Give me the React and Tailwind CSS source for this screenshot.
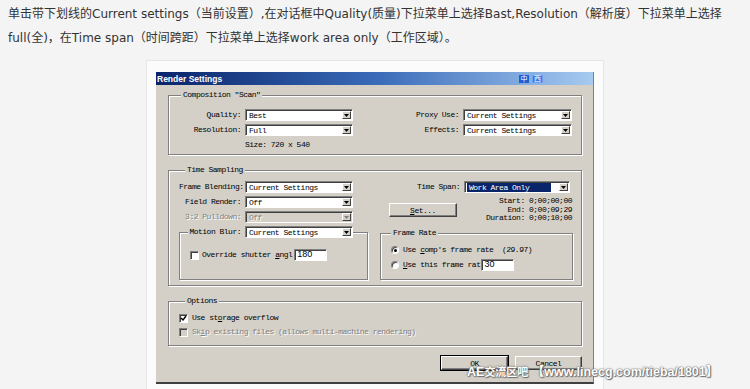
const mono = "font-['Liberation_Mono',monospace] text-[8px] tracking-[-0.5px] text-black";
const groupBox =
  "relative border border-[#808080] shadow-[inset_1px_1px_0_#fff,1px_1px_0_#fff]";
const dim = "text-[#808080] [text-shadow:1px_1px_0_#fff]";

const Arrow = ({ disabled }) => (
  <div className="mr-[1px] flex h-[8px] w-[9px] items-center justify-center border border-t-white border-l-white border-r-[#404040] border-b-[#404040] bg-[#d4d0c8]">
    <svg width="5" height="3" viewBox="0 0 5 3">
      <path d="M0 0h5L2.5 3z" fill={disabled ? "#808080" : "#000"} />
    </svg>
  </div>
);

const Select = ({ className, value, disabled, selected }) => (
  <div
    className={`flex h-[12px] items-center border border-t-[#808080] border-l-[#808080] border-r-white border-b-white shadow-[inset_1px_1px_0_#404040] ${
      disabled ? "bg-[#d4d0c8]" : "bg-white"
    } ${className}`}
  >
    <div className="flex-1 pl-[2px]">
      <span
        className={`block whitespace-pre leading-[9px] ${
          selected ? "mr-[8px] bg-[#0a246a] pl-[2px] text-white" : "pl-[1px]"
        } ${disabled ? dim : ""}`}
      >
        {value}
      </span>
    </div>
    <Arrow disabled={disabled} />
  </div>
);

const Field = ({ className, value }) => (
  <div
    className={`flex h-[12px] items-center border border-t-[#808080] border-l-[#808080] border-r-white border-b-white bg-white pl-[2px] shadow-[inset_1px_1px_0_#404040] font-['Liberation_Sans',sans-serif] text-[9px] tracking-normal ${className}`}
  >
    {value}
  </div>
);

const Check = ({ checked, disabled }) => (
  <div
    className={`flex h-[9px] w-[9px] items-center justify-center border border-t-[#808080] border-l-[#808080] border-r-white border-b-white shadow-[inset_1px_1px_0_#404040] ${
      disabled ? "bg-[#d4d0c8]" : "bg-white"
    }`}
  >
    {checked && (
      <svg width="7" height="7" viewBox="0 0 7 7">
        <path d="M1 3l2 2 3-4" stroke="#000" strokeWidth="1.4" fill="none" />
      </svg>
    )}
  </div>
);

const Radio = ({ on }) => (
  <div className="flex h-[8px] w-[8px] items-center justify-center rounded-full border border-t-[#808080] border-l-[#808080] border-r-white border-b-white bg-white shadow-[inset_1px_1px_0_#404040]">
    {on && <div className="h-[3px] w-[3px] rounded-full bg-black" />}
  </div>
);

const Button = ({ className, children }) => (
  <div
    className={`flex items-center justify-center border border-t-white border-l-white border-r-[#404040] border-b-[#404040] bg-[#d4d0c8] shadow-[inset_-1px_-1px_0_#808080] leading-[9px] ${className}`}
  >
    {children}
  </div>
);

const Row = ({ label, labelW, children, className = "" }) => (
  <div className={`flex h-[12px] items-center ${className}`}>
    <div className={`whitespace-nowrap text-right leading-[10px] ${labelW}`}>{label}</div>
    {children}
  </div>
);

export default function App() {
  return (
    <div className="relative h-[389px] w-[750px] overflow-hidden bg-[#f4f4f4]">
      {/* article text */}
      <p className="h-[60px] pl-[8px] pt-[2px] font-['DejaVu_Sans','Noto_Sans_CJK_SC',sans-serif] text-[12px] leading-[24px] text-[#333] whitespace-nowrap">
        单击带下划线的Current settings（当前设置）,在对话框中Quality(质量)下拉菜单上选择Bast,Resolution（解析度）下拉菜单上选择
        <br />
        full(全)，在Time span（时间跨距）下拉菜单上选择work area only（工作区域）。
      </p>

      {/* picture frame */}
      <div className="ml-[146px] h-[340px] w-[458px] border border-[#e6e6e6] bg-[#fbfbfb] px-[9px] pt-[11px]">
        <div className={`w-[438px] border-b-2 border-r border-b-[#404040] border-r-[#808080] bg-[#d4d0c8] ${mono}`}>
          {/* title bar */}
          <div className="flex h-[13px] items-center bg-gradient-to-r from-[#0a246a] via-[#3a6ab8] to-[#a6caf0] pl-[1px] pr-[50px]">
            <span className="flex-1 font-['Liberation_Sans',sans-serif] text-[8.5px] font-bold tracking-normal text-white leading-[10px]">
              Render Settings
            </span>
            <span className="flex h-[8px] w-[10px] items-center justify-center bg-[#1f5fd0] font-['Noto_Sans_CJK_SC',sans-serif] text-[7px] tracking-normal text-white">
              中
            </span>
            <span className="ml-[3px] flex h-[8px] w-[11px] items-center justify-center border border-[#6fa0ef] bg-[#3a7ae8] font-['Noto_Sans_CJK_SC',sans-serif] text-[7px] tracking-normal text-white">
              西
            </span>
          </div>

          {/* body */}
          <div className="flex flex-col pl-[12px] pr-[11px] pb-[12px]">
            {/* Composition */}
            <div className={`mt-[10px] h-[60px] ${groupBox}`}>
              <span className="absolute -top-[6px] left-[12px] bg-[#d4d0c8] px-[2px] leading-[10px]">
                Composition "Scan"
              </span>
              <div className="mt-[13px] flex pr-[9px]">
                <Row label="Quality:" labelW="w-[72px]">
                  <Select className="ml-[4px] w-[108px]" value="Best" />
                </Row>
                <div className="flex-1" />
                <Row label="Proxy Use:" labelW="w-[60px]">
                  <Select className="ml-[4px] w-[109px]" value="Current Settings" />
                </Row>
              </div>
              <div className="mt-[3px] flex pr-[9px]">
                <Row label="Resolution:" labelW="w-[72px]">
                  <Select className="ml-[4px] w-[108px]" value="Full" />
                </Row>
                <div className="flex-1" />
                <Row label="Effects:" labelW="w-[60px]">
                  <Select className="ml-[4px] w-[109px]" value="Current Settings" />
                </Row>
              </div>
              <div className="mt-[4px] pl-[76px] leading-[10px]">Size: 720 x 540</div>
            </div>

            {/* Time Sampling */}
            <div className={`mt-[15px] flex h-[116px] ${groupBox}`}>
              <span className="absolute -top-[6px] left-[16px] bg-[#d4d0c8] px-[2px] leading-[10px]">
                Time Sampling
              </span>
              <div className="flex w-[199px] flex-col pl-[10px] pt-[10px]">
                <Row label="Frame Blending:" labelW="w-[62px]">
                  <Select className="ml-[4px] w-[108px]" value="Current Settings" />
                </Row>
                <Row label="Field Render:" labelW="w-[62px]" className="mt-[3px]">
                  <Select className="ml-[4px] w-[108px]" value="Off" />
                </Row>
                <Row label={<span className={dim}>3:2 Pulldown:</span>} labelW="w-[62px]" className="mt-[3px]">
                  <Select className="ml-[4px] w-[108px]" value="Off" disabled />
                </Row>
                <div className={`mt-[9px] h-[48px] w-[189px] ${groupBox}`}>
                  <div className="-mt-[7px] flex h-[12px] items-center">
                    <div className="flex w-[61px] justify-end">
                      <span className="whitespace-nowrap bg-[#d4d0c8] pl-[1px] leading-[10px]">Motion Blur:</span>
                    </div>
                    <div className="w-[4px] self-stretch bg-[#d4d0c8]" />
                    <Select className="w-[108px]" value="Current Settings" />
                  </div>
                  <div className="mt-[11px] flex h-[12px] items-center pl-[10px]">
                    <Check />
                    <span className="ml-[3px] whitespace-pre leading-[10px]">
                      Override shutter <span className="underline">a</span>ngl
                    </span>
                    <Field className="ml-[2px] w-[33px]" value="180" />
                  </div>
                </div>
              </div>

              <div className="ml-[12px] flex w-[193px] flex-col pt-[10px]">
                <Row label="Time Span:" labelW="w-[80px]">
                  <Select className="ml-[4px] w-[106px]" value="Work Area Only" selected />
                </Row>
                <div className="mt-[4px] flex h-[26px] items-start">
                  <Button className="ml-[9px] mt-[6px] h-[14px] w-[68px]">
                    <span>
                      <span className="underline">S</span>et...
                    </span>
                  </Button>
                  <div className="ml-auto whitespace-pre pr-[1px] text-right leading-[8.5px]">
                    Start: 0;00;00;00
                    <br />
                    End: 0;00;09;29
                    <br />
                    Duration: 0;00;10;00
                  </div>
                </div>
                <div className={`mt-[10px] h-[47px] ${groupBox}`}>
                  <span className="absolute -top-[6px] left-[10px] bg-[#d4d0c8] px-[2px] leading-[10px]">
                    Frame Rate
                  </span>
                  <div className="mt-[11px] flex h-[10px] items-center pl-[10px]">
                    <Radio on />
                    <span className="ml-[4px] whitespace-pre leading-[10px]">
                      Use <span className="underline">c</span>omp's frame rate  (29.97)
                    </span>
                  </div>
                  <div className="mt-[4px] flex h-[12px] items-center pl-[10px]">
                    <Radio />
                    <span className="ml-[4px] whitespace-pre leading-[10px]">
                      <span className="underline">U</span>se this frame rat
                    </span>
                    <Field className="ml-[1px] w-[33px]" value="30" />
                  </div>
                </div>
              </div>
            </div>

            {/* Options */}
            <div className={`mt-[15px] h-[45px] ${groupBox}`}>
              <span className="absolute -top-[6px] left-[16px] bg-[#d4d0c8] px-[2px] leading-[10px]">
                Options
              </span>
              <div className="mt-[11px] flex h-[10px] items-center pl-[10px]">
                <Check checked />
                <span className="ml-[4px] whitespace-pre leading-[10px]">
                  Use st<span className="underline">o</span>rage overflow
                </span>
              </div>
              <div className="mt-[4px] flex h-[10px] items-center pl-[10px]">
                <Check disabled />
                <span className={`ml-[4px] whitespace-pre leading-[10px] ${dim}`}>
                  Sk<span className="underline">i</span>p existing files (allows multi-machine rendering)
                </span>
              </div>
            </div>

            {/* buttons */}
            <div className="mt-[10px] flex justify-end gap-[7px]">
              <Button className="h-[14px] w-[67px] outline outline-1 outline-black">OK</Button>
              <Button className="h-[14px] w-[67px]">Cancel</Button>
            </div>
          </div>
        </div>
      </div>

      {/* watermark */}
      <div className="absolute left-[467px] top-[365px] whitespace-nowrap font-['Liberation_Sans','Noto_Sans_CJK_SC',sans-serif] text-[12.5px] font-bold leading-[15px] text-white [text-shadow:0_0_1px_#555,0_0_2px_#666,1px_1px_1px_#777]">
        AE<span className="text-[11px]">交流区吧</span> 【www.linecg.com/tieba/1801】
      </div>
    </div>
  );
}
